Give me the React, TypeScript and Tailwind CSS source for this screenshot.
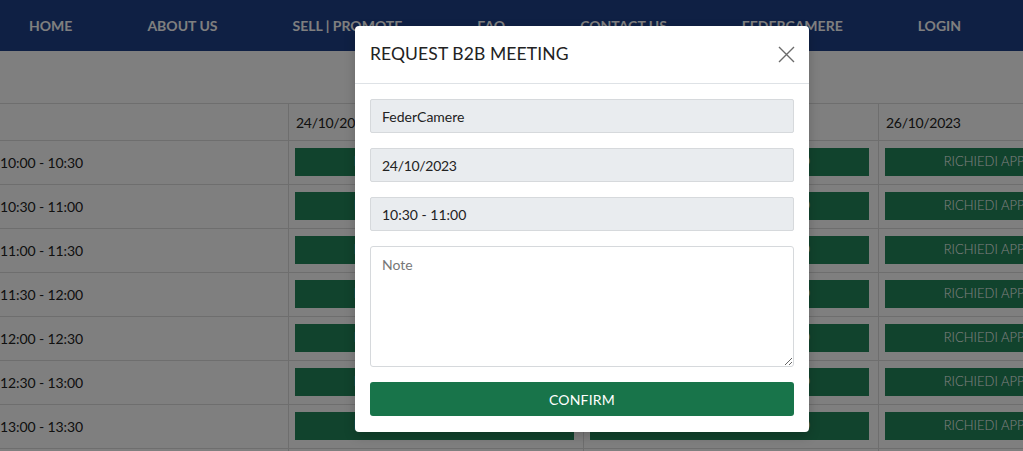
const navItems = ['HOME', 'ABOUT US', 'SELL | PROMOTE', 'FAQ', 'CONTACT US', 'FEDERCAMERE', 'LOGIN'];

const days = ['24/10/2023', '25/10/2023', '26/10/2023'];

const slots = [
  '10:00 - 10:30',
  '10:30 - 11:00',
  '11:00 - 11:30',
  '11:30 - 12:00',
  '12:00 - 12:30',
  '12:30 - 13:00',
  '13:00 - 13:30',
  '13:30 - 14:00',
];

function Schedule() {
  return (
    <div className="mt-[52px] border-t border-[#dcdcdc] w-[1180px]">
      {/* header row */}
      <div className="grid grid-cols-[288px_295px_295px_295px] h-[37px] border-b border-[#dcdcdc]">
        <div />
        {days.map(d => (
          <div key={d} className="border-l border-[#dcdcdc] pl-[7px] flex items-center text-[14px] tracking-[-0.3px] text-[#222]">
            {d}
          </div>
        ))}
      </div>

      {slots.map(slot => (
        <div key={slot} className="grid grid-cols-[288px_295px_295px_295px] h-[44px] border-b border-[#dcdcdc]">
          <div className="flex items-center text-[14px] tracking-[-0.1px] text-[#222]">{slot}</div>
          {days.map(d => (
            <div key={d} className="border-l border-[#dcdcdc] pl-[6px] pr-[9px] pt-[7px]">
              <button className="w-full h-[28px] bg-[#22865a] text-white text-[13px] font-light">
                RICHIEDI APPUNTAMENTO
              </button>
            </div>
          ))}
        </div>
      ))}
    </div>
  );
}

function MeetingModal() {
  const field = 'h-[34px] w-full bg-[#e9ecef] border border-[#d6d9dc] rounded-[2px] px-[11px] text-[14px] text-[#222] outline-none';
  return (
    <div className="absolute left-[355px] top-[26px] w-[454px] bg-white rounded-[4px] shadow-[0_4px_12px_rgba(0,0,0,0.2)]">
      <div className="h-[58px] flex items-center justify-between pl-[15px] pr-[14px] border-b border-[#dee2e6]">
        <h5 className="text-[17.5px] text-[#222] tracking-[0.1px]">REQUEST B2B MEETING</h5>
        <button className="w-[18px] h-[18px] flex items-center justify-center">
          <svg width="17" height="17" viewBox="0 0 17 17" fill="none" stroke="#6b6b6b" strokeWidth="1.4">
            <path d="M1 1 L16 16 M16 1 L1 16" />
          </svg>
        </button>
      </div>

      <div className="px-[15px] pt-[15px] pb-[16px] flex flex-col gap-[15px]">
        <input readOnly value="FederCamere" className={field} />
        <input readOnly value="24/10/2023" className={`${field} tracking-[-0.3px]`} />
        <input readOnly value="10:30 - 11:00" className={field} />
        <textarea
          placeholder="Note"
          className="h-[121px] w-full bg-white border border-[#d6d9dc] rounded-[3px] px-[11px] py-[7px] text-[14px] text-[#222] placeholder:text-[#777] outline-none"
        />
        <button className="h-[34px] w-full bg-[#18744a] rounded-[3px] text-white text-[14px] tracking-[0.2px]">
          CONFIRM
        </button>
      </div>
    </div>
  );
}

export default function App() {
  return (
    <div className="relative w-[1023px] h-[451px] overflow-hidden bg-white font-['Lato','Open_Sans',sans-serif]">
      <nav className="h-[51px] bg-[#1e4088] flex items-center pl-[29px] gap-[75px]">
        {navItems.map(item => (
          <a key={item} className="text-white text-[14px] font-bold">
            {item}
          </a>
        ))}
      </nav>

      <Schedule />

      {/* backdrop */}
      <div className="absolute inset-0 bg-[rgba(0,0,0,0.5)]" />

      <MeetingModal />
    </div>
  );
}
